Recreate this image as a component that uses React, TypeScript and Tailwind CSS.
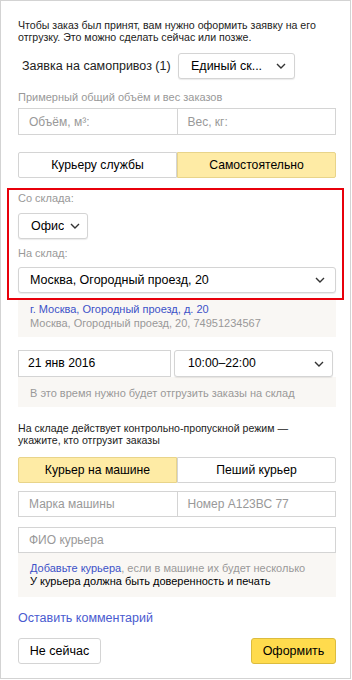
import React from 'react';

const Chevron = () => (
    <svg width="10" height="6" viewBox="0 0 10 6" className="shrink-0">
        <path d="M1 1l4 4 4-4" fill="none" stroke="#333" strokeWidth="1.4" />
    </svg>
);

function Select({ label, className = '' }: { label: string; className?: string }) {
    return (
        <div className={`flex h-[26px] items-center justify-between rounded-[3px] border border-[#d4d4d4] bg-white shadow-[0_1px_1px_rgba(0,0,0,0.08)] text-black ${className}`}>
            <span className="truncate">{label}</span>
            <Chevron />
        </div>
    );
}

function Segmented({ left, right, active }: { left: string; right: string; active: 'left' | 'right' }) {
    const on = 'bg-[#feeba5] border-[#e8d48a]';
    const off = 'bg-white border-[#d4d4d4]';
    return (
        <div className="flex h-[26px] text-[12.2px] text-black">
            <div className={`flex flex-1 items-center justify-center border rounded-l-[2px] ${active === 'left' ? on : off}`}>{left}</div>
            <div className={`flex flex-1 items-center justify-center border rounded-r-[2px] ${active === 'right' ? on : off}`}>{right}</div>
        </div>
    );
}

export default function App() {
    return (
        <div className="w-[351px] h-[679px] border border-[#d3d3d3] bg-white font-['Liberation_Sans',Arial,sans-serif]">
            <div className="ml-[17px] w-[318px] pt-[18px]">
                <p className="text-[10.6px] leading-[12px] text-[#222]">
                    Чтобы заказ был принят, вам нужно оформить заявку на его отгрузку. Это можно сделать сейчас или позже.
                </p>

                <div className="mt-[10px] flex items-center">
                    <span className="ml-[4px] w-[156px] text-[12.5px] text-[#222]">Заявка на самопривоз (1)</span>
                    <Select label="Единый ск..." className="w-[117px] pl-[12px] pr-[8px] text-[12.5px]" />
                </div>

                <div className="mt-[12px] text-[11px] leading-[12px] text-[#999]">Примерный общий объём и вес заказов</div>
                <div className="mt-[5px] flex h-[27px] text-[12px] text-[#999]">
                    <div className="flex flex-1 items-center border border-[#d4d4d4] pl-[10px]">Объём, м³:</div>
                    <div className="flex flex-1 items-center border border-l-0 border-[#d4d4d4] pl-[10px]">Вес, кг:</div>
                </div>

                <div className="mt-[17px]">
                    <Segmented left="Курьеру службы" right="Самостоятельно" active="right" />
                </div>

                <div className="mt-[10px] -ml-[11px] -mr-[8px] border-2 border-[#e8000b] pl-[9px] pr-[6px] pt-[2px] pb-[5px]">
                    <div className="text-[11px] leading-[12px] text-[#999]">Со склада:</div>
                    <Select label="Офис" className="mt-[9px] w-[70px] pl-[12px] pr-[7px] text-[12.5px]" />
                    <div className="mt-[8px] text-[11px] leading-[12px] text-[#999]">На склад:</div>
                    <Select label="Москва, Огородный проезд, 20" className="mt-[8px] pl-[11px] pr-[10px] text-[12.5px]" />
                </div>

                <div className="bg-[#f9f7f4] pl-[12px] pt-[2px] pb-[7px] text-[11px] leading-[14px]">
                    <div className="text-[#3c52c8]">г. Москва, Огородный проезд, д. 20</div>
                    <div className="text-[#999]">Москва, Огородный проезд, 20, 74951234567</div>
                </div>

                <div className="mt-[13px] flex h-[27px] gap-[3px] pr-[3px] text-[12.2px] text-black">
                    <div className="flex w-[153px] items-center border border-[#d4d4d4] pl-[9px]">21 янв 2016</div>
                    <Select label="10:00–22:00" className="flex-1 h-[27px] pl-[13px] pr-[8px]" />
                </div>
                <div className="bg-[#f9f7f4] pl-[12px] pt-[9px] pb-[7px] text-[11px] leading-[14px] text-[#999]">
                    В это время нужно будет отгрузить заказы на склад
                </div>

                <p className="mt-[15px] text-[10.6px] leading-[12px] text-[#222]">
                    На складе действует контрольно-пропускной режим —<br />укажите, кто отгрузит заказы
                </p>

                <div className="mt-[11px]">
                    <Segmented left="Курьер на машине" right="Пеший курьер" active="left" />
                </div>

                <div className="mt-[8px] flex h-[26px] text-[12px] text-[#999]">
                    <div className="flex flex-1 items-center border border-[#d4d4d4] pl-[10px]">Марка машины</div>
                    <div className="flex flex-1 items-center border border-l-0 border-[#d4d4d4] pl-[10px]">Номер А123ВС 77</div>
                </div>
                <div className="mt-[10px] flex h-[26px] items-center border border-[#d4d4d4] pl-[10px] text-[12px] text-[#999]">
                    ФИО курьера
                </div>
                <div className="bg-[#f9f7f4] pl-[12px] pt-[9px] pb-[9px] text-[11px] leading-[13px]">
                    <div className="text-[#999]">
                        <span className="text-[#3c52c8]">Добавьте курьера</span>, если в машине их будет несколько
                    </div>
                    <div className="text-black">У курьера должна быть доверенность и печать</div>
                </div>

                <div className="mt-[13px] text-[12.5px] leading-[16px] text-[#4a5bd0]">Оставить комментарий</div>

                <div className="mt-[12px] flex justify-between text-[12.5px] text-black">
                    <div className="flex h-[26px] w-[83px] items-center justify-center rounded-[3px] border border-[#d4d4d4] bg-white">Не сейчас</div>
                    <div className="flex h-[26px] w-[85px] items-center justify-center rounded-[3px] border border-[#dcbc3e] bg-[#ffdb4d]">Оформить</div>
                </div>
            </div>
        </div>
    );
}
